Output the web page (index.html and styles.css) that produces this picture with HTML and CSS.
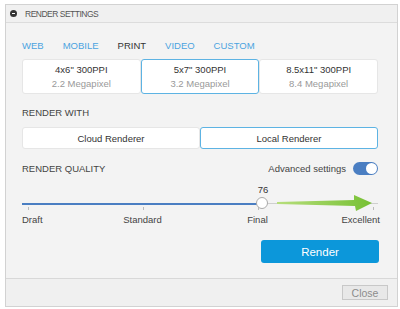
FILE: index.html
```html
<!DOCTYPE html>
<html lang="en">
<head>
    <meta charset="UTF-8">
    <title>Render Settings</title>
    <link rel="stylesheet" href="styles.css">
</head>
<body>
    <div class="dialog">
        <header class="dialog-head">
            <span class="collapse-icon"></span>
            <span class="head-title">RENDER SETTINGS</span>
        </header>
        <main class="dialog-body">
            <nav class="tabs">
                <a class="tab">WEB</a>
                <a class="tab">MOBILE</a>
                <a class="tab active">PRINT</a>
                <a class="tab">VIDEO</a>
                <a class="tab">CUSTOM</a>
            </nav>
            <div class="sizes">
                <div class="size">
                    <span class="size-name">4x6" 300PPI</span>
                    <span class="size-mp">2.2 Megapixel</span>
                </div>
                <div class="size selected">
                    <span class="size-name">5x7" 300PPI</span>
                    <span class="size-mp">3.2 Megapixel</span>
                </div>
                <div class="size">
                    <span class="size-name">8.5x11" 300PPI</span>
                    <span class="size-mp">8.4 Megapixel</span>
                </div>
            </div>

            <div class="section-label">RENDER WITH</div>
            <div class="renderers">
                <button class="renderer">Cloud Renderer</button>
                <button class="renderer selected">Local Renderer</button>
            </div>

            <div class="quality-head">
                <span class="section-label">RENDER QUALITY</span>
                <span class="advanced">Advanced settings <span class="toggle"><span class="toggle-knob"></span></span></span>
            </div>

            <div class="slider">
                <div class="track">
                    <span class="track-fill"></span>
                    <span class="knob" style="left: 240px"><span class="knob-value">76</span></span>
                </div>
                <div class="ticks">
                    <i></i><i></i><i></i><i></i>
                </div>
                <div class="tick-labels">
                    <span>Draft</span>
                    <span>Standard</span>
                    <span>Final</span>
                    <span>Excellent</span>
                </div>
                <svg class="arrow" width="100" height="20" viewBox="0 0 100 20">
                    <defs>
                        <linearGradient id="arrowGreen" x1="0" x2="1" y1="0" y2="0">
                            <stop offset="0" stop-color="#b7de7c"/>
                            <stop offset="1" stop-color="#76c033"/>
                        </linearGradient>
                    </defs>
                    <polygon points="0,8 77,6 77,1 95,9 79,17 78,12 0,10" fill="url(#arrowGreen)"/>
                </svg>
            </div>

            <div class="actions">
                <button class="render-btn">Render</button>
            </div>
        </main>
        <footer class="dialog-foot">
            <button class="close-btn">Close</button>
        </footer>
    </div>
</body>
</html>
```

FILE: styles.css
```css
body {
    margin: 0;
    background-color: #ffffff;
    font-family: "Liberation Sans", Arial, sans-serif;
    color: #444;
}
.dialog {
    box-sizing: border-box;
    width: 393px;
    height: 303px;
    margin: 4px 0 0 5px;
    border: 1px solid #d2d2d2;
    background-color: #f3f3f3;
    display: flex;
    flex-direction: column;
}
.dialog-head {
    height: 17px;
    border-bottom: 1px solid #dcdcdc;
    background-color: #f0f0f0;
    display: flex;
    align-items: center;
    padding-left: 4px;
}
.collapse-icon {
    position: relative;
    width: 7px;
    height: 7px;
    border-radius: 50%;
    background-color: #333;
    margin-right: 8px;
}
.collapse-icon::after {
    content: "";
    position: absolute;
    left: 2px;
    top: 3px;
    width: 3px;
    height: 1px;
    background-color: #fff;
}
.head-title {
    font-size: 8.5px;
    letter-spacing: -0.5px;
    color: #555;
}
.dialog-body {
    flex: 1;
    padding: 16px 19px 0 16px;
}
.tabs {
    display: flex;
    gap: 19px;
    height: 12px;
    align-items: center;
    font-size: 9.5px;
}
.tab {
    color: #4ba3e0;
}
.tab.active {
    color: #333;
}
.sizes {
    margin-top: 8px;
    display: grid;
    grid-template-columns: 1fr 1fr 1fr;
    height: 35px;
}
.size {
    box-sizing: border-box;
    background-color: #fff;
    border: 1px solid #e6e6e6;
    border-radius: 3px;
    display: flex;
    flex-direction: column;
    align-items: center;
    justify-content: center;
    gap: 3px;
    font-size: 9.5px;
}
.size.selected {
    border-color: #5db3e3;
}
.size-name {
    color: #333;
}
.size-mp {
    color: #999;
}
.section-label {
    font-size: 9.5px;
    color: #444;
}
.dialog-body > .section-label {
    margin-top: 13px;
    height: 12px;
    line-height: 12px;
}
.renderers {
    margin-top: 8px;
    display: grid;
    grid-template-columns: 1fr 1fr;
    height: 22px;
}
.renderer {
    box-sizing: border-box;
    background-color: #fff;
    border: 1px solid #e6e6e6;
    border-radius: 3px;
    font-family: inherit;
    font-size: 9.5px;
    color: #333;
    padding: 0;
}
.renderer.selected {
    border-color: #5db3e3;
}
.quality-head {
    margin-top: 12px;
    display: flex;
    justify-content: space-between;
    align-items: center;
    height: 15px;
}
.advanced {
    display: flex;
    align-items: center;
    gap: 7px;
    font-size: 9.5px;
    color: #444;
}
.toggle {
    width: 25px;
    height: 13px;
    border-radius: 7px;
    background-color: #4a7ec2;
    display: flex;
    justify-content: flex-end;
    align-items: center;
    padding-right: 1px;
    box-sizing: border-box;
}
.toggle-knob {
    width: 11px;
    height: 11px;
    border-radius: 50%;
    background-color: #fff;
}
.slider {
    position: relative;
    margin-top: 28px;
}
.track {
    position: relative;
    height: 1px;
    background-color: #cfcfcf;
}
.track-fill {
    display: block;
    width: 240px;
    height: 2px;
    margin-top: -1px;
    background-color: #4a7ec2;
}
.knob {
    position: absolute;
    top: -6px;
    width: 12px;
    height: 12px;
    margin-left: -6px;
    box-sizing: border-box;
    border: 1px solid #aaa;
    border-radius: 50%;
    background-color: #fff;
}
.knob-value {
    position: absolute;
    left: -9px;
    width: 30px;
    top: -14px;
    text-align: center;
    font-size: 9.5px;
    color: #333;
}
.ticks {
    display: flex;
    justify-content: space-between;
    padding: 0 4px 0 6px;
    margin-top: 3px;
}
.ticks i {
    width: 1px;
    height: 3px;
    background-color: #bbb;
}
.tick-labels {
    display: grid;
    grid-template-columns: 63px 115px 115px 1fr;
    margin-top: 4px;
    font-size: 9.5px;
    color: #444;
}
.tick-labels span:nth-child(2),
.tick-labels span:nth-child(3) {
    text-align: center;
}
.tick-labels span:last-child {
    text-align: right;
    margin-right: -2px;
}
.arrow {
    position: absolute;
    left: 255px;
    top: -9px;
}
.actions {
    display: flex;
    justify-content: flex-end;
    margin-top: 15px;
}
.render-btn {
    width: 118px;
    height: 23px;
    margin-right: -1px;
    border: none;
    border-radius: 3px;
    background-color: #0c97da;
    color: #fff;
    font-family: inherit;
    font-size: 11.5px;
}
.dialog-foot {
    height: 27px;
    border-top: 1px solid #d8d8d8;
    background-color: #f0f0f0;
    display: flex;
    justify-content: flex-end;
    align-items: center;
    padding-right: 9px;
}
.close-btn {
    width: 46px;
    height: 15px;
    padding: 0;
    border: 1px solid #c8c8c8;
    background-color: #e8e8e8;
    color: #8c8c8c;
    font-family: inherit;
    font-size: 10.5px;
}
```
